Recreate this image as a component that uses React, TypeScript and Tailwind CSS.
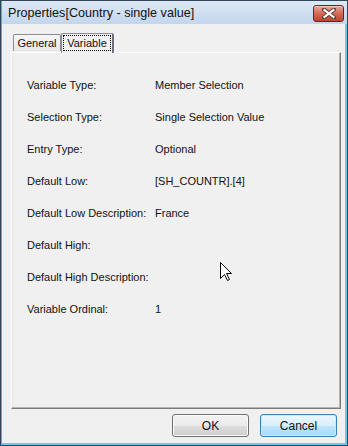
import React from "react";

const rows: [string, string][] = [
  ["Variable Type:", "Member Selection"],
  ["Selection Type:", "Single Selection Value"],
  ["Entry Type:", "Optional"],
  ["Default Low:", "[SH_COUNTR].[4]"],
  ["Default Low Description:", "France"],
  ["Default High:", ""],
  ["Default High Description:", ""],
  ["Variable Ordinal:", "1"],
];

export default function App() {
  return (
    <div
      className="relative w-[348px] h-[446px] border border-[#33455a] bg-[#f0f0f0] flex flex-col overflow-hidden text-black"
      style={{ fontFamily: '"Liberation Sans", Arial, sans-serif' }}
    >
      {/* Title bar */}
      <div className="h-[23px] shrink-0 flex items-center justify-between pl-[6px] pr-[3px] bg-gradient-to-b from-[#dde8f5] to-[#c3d6ec] border-l border-[#6f9fd4]">
        <span className="text-[12.6px] text-[#111] leading-none mt-[2px]">Properties[Country - single value]</span>
        <div className="w-[31px] h-[17px] mt-[1px] rounded-[3px] border border-[#5a2a2a] bg-gradient-to-b from-[#e8a99a] via-[#d46a55] to-[#c0432e] flex items-center justify-center shadow-[inset_0_1px_0_#f3c9bf]">
          <svg width="14" height="11" viewBox="0 0 14 11">
            <path d="M2 1.5 L12 9.5 M12 1.5 L2 9.5" stroke="#5a3a3a" strokeWidth="4" strokeLinecap="square" />
            <path d="M2.5 2 L11.5 9 M11.5 2 L2.5 9" stroke="#ffffff" strokeWidth="2.2" strokeLinecap="square" />
          </svg>
        </div>
      </div>

      {/* Client */}
      <div className="flex-1 flex flex-col border-l border-[#6f9fd4] border-r-2 border-r-[#6fc8ea] border-b-2 border-b-[#6fc8ea] pl-[9px] pr-[4px]">
        {/* Tabs */}
        <div className="h-[28px] shrink-0 flex items-end pl-[2px] relative z-10">
          <div className="h-[17px] w-[48px] mb-[1px] border border-b-0 border-[#898c95] rounded-t-[2px] bg-gradient-to-b from-[#f6f6f6] to-[#e6e6e6] flex items-center justify-center text-[11px] text-[#111]">
            General
          </div>
          <div className="h-[20px] w-[53px] -mb-[1px] border border-b-0 border-[#898c95] border-r-2 border-r-[#6f7278] rounded-t-[2px] bg-[#f0f0f0] flex items-start justify-center pt-[1px]">
            <span className="border border-dotted border-black px-[3px] h-[16px] leading-[14px] text-[11px] text-[#111]">Variable</span>
          </div>
        </div>

        {/* Panel */}
        <div className="h-[357px] shrink-0 border-t border-l border-white border-r border-b border-r-[#7a7a7a] border-b-[#7a7a7a] shadow-[inset_-1px_-1px_0_#b4b4b4,inset_1px_0_0_#e3e3e3] pt-[16px] pl-[15px]">
          {rows.map(([label, value]) => (
            <div key={label} className="h-[32px] flex items-center text-[11px] text-[#111]">
              <span className="w-[128px] shrink-0">{label}</span>
              <span>{value}</span>
            </div>
          ))}
        </div>

        {/* Buttons */}
        <div className="flex justify-end gap-[11px] mt-[5px] pr-[4px]">
          <button className="w-[77px] h-[23px] rounded-[3px] border border-[#707070] bg-[linear-gradient(to_bottom,#f2f2f2_0%,#ebebeb_50%,#dddddd_51%,#cfcfcf_100%)] shadow-[inset_0_0_0_1px_#fbfbfb] text-[12px] text-[#111]">
            OK
          </button>
          <button className="w-[77px] h-[23px] rounded-[3px] border border-[#3c7fb1] bg-[linear-gradient(to_bottom,#eaf6fd_0%,#d9f0fc_50%,#bee6fd_51%,#a7d9f5_100%)] shadow-[inset_0_0_0_1px_#c8ebfc] text-[12px] text-[#111]">
            Cancel
          </button>
        </div>
      </div>

      {/* Mouse cursor */}
      <svg className="absolute left-[219px] top-[261px]" width="13" height="20" viewBox="0 0 13 20">
        <path d="M0.5 0.5 L0.5 16.5 L4.5 12.5 L7.5 18.5 L9.5 17.5 L6.5 11.5 L11.5 11.5 Z" fill="#ffffff" stroke="#000000" strokeWidth="1" />
      </svg>
    </div>
  );
}
